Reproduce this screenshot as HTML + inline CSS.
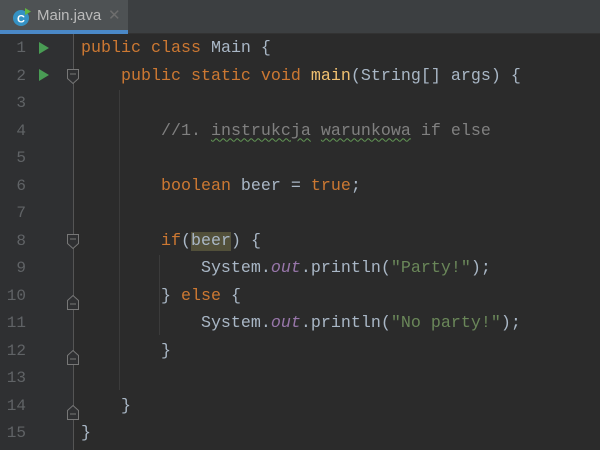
<!DOCTYPE html>
<html><head><style>
body{margin:0;width:600px;height:450px;background:#2b2b2b;overflow:hidden;position:relative;font-family:"Liberation Mono",monospace}
.tabs{position:absolute;left:0;top:0;width:600px;height:33px;background:#3c3f41;border-bottom:1px solid #323232}
.tab{position:absolute;left:0;top:0;width:128px;height:30px;background:#4e5254;border-bottom:4px solid #4a88c7;box-sizing:content-box}
.tab .t{position:absolute;left:37px;top:7px;font:15px "Liberation Sans",sans-serif;color:#bbbbbb}
.tab .x{position:absolute;left:108px;top:6px;font:15px "Liberation Sans",sans-serif;color:#6e6e6e}
.gut{position:absolute;left:0;top:34px;width:73px;height:416px;background:#2f3032}
.ln{position:absolute;left:0;width:26px;text-align:right;color:#606366;font-size:16px}
.code{position:absolute;left:81px;font-size:16.67px;color:#a9b7c6;white-space:pre;line-height:20px}
.k{color:#cc7832}.m{color:#f0c070}.c{color:#808080}.s{color:#6a8759}.f{color:#9876aa;font-style:italic}
.hl{background:#52503a}
.w{text-decoration:underline wavy #629755;text-decoration-thickness:1px;text-underline-offset:3px}
.run{position:absolute;left:39px;width:0;height:0;border-left:10px solid #499c54;border-top:6px solid transparent;border-bottom:6px solid transparent}
.guide{position:absolute;width:1px;background:#3b3b3b}
</style></head><body>
<div class="tabs"><div class="tab">
<svg style="position:absolute;left:12px;top:7px" width="20" height="20" viewBox="0 0 20 20"><circle cx="9" cy="11" r="8" fill="#3592c4"/><text x="5" y="15.5" font-family="Liberation Sans" font-weight="bold" font-size="11" fill="#fff">C</text><path d="M13 1 L19 4.5 L13 8Z" fill="#62b543"/></svg>
<span class="t">Main.java</span><span class="x">✕</span></div></div>
<div class="gut"></div>
<div class="guide" style="left:73px;top:34px;height:416px;background:#555"></div>
<div class="guide" style="left:119px;top:90px;height:300px"></div>
<div class="guide" style="left:159px;top:255px;height:80px"></div>
<svg style="position:absolute;left:66px;top:69px" width="14" height="380" viewBox="0 0 14 380" fill="#2f3032" stroke="#777">
<path d="M1.5 0.5h11v9l-5.5 5l-5.5-5z M4 5h6"/>
<path d="M1.5 165.5h11v9l-5.5 5l-5.5-5z M4 170h6"/>
<path d="M1.5 231.5l5.5-5l5.5 5v9h-11z M4 235h6"/>
<path d="M1.5 286.5l5.5-5l5.5 5v9h-11z M4 290h6"/>
<path d="M1.5 341.5l5.5-5l5.5 5v9h-11z M4 345h6"/>
</svg>
<div class="run" style="top:42px"></div><div class="run" style="top:69px"></div>
<div id="L"></div>
<script>
var lines=[
'<span class="k">public class</span> Main {',
'    <span class="k">public static void</span> <span class="m">main</span>(String[] args) {',
'',
'        <span class="c">//1. <span class="w">instrukcja</span> <span class="w">warunkowa</span> if else</span>',
'',
'        <span class="k">boolean</span> beer = <span class="k">true</span>;',
'',
'        <span class="k">if</span>(<span class="hl">beer</span>) {',
'            System.<span class="f">out</span>.println(<span class="s">"Party!"</span>);',
'        } <span class="k">else</span> {',
'            System.<span class="f">out</span>.println(<span class="s">"No party!"</span>);',
'        }',
'',
'    }',
'}'];
var h='';
for(var i=0;i<15;i++){var y=39+i*27.5;
h+='<div class="ln" style="top:'+(y)+'px">'+(i+1)+'</div><div class="code" style="top:'+y+'px">'+lines[i]+'</div>';}
document.getElementById('L').innerHTML=h;
</script>
</body></html>
